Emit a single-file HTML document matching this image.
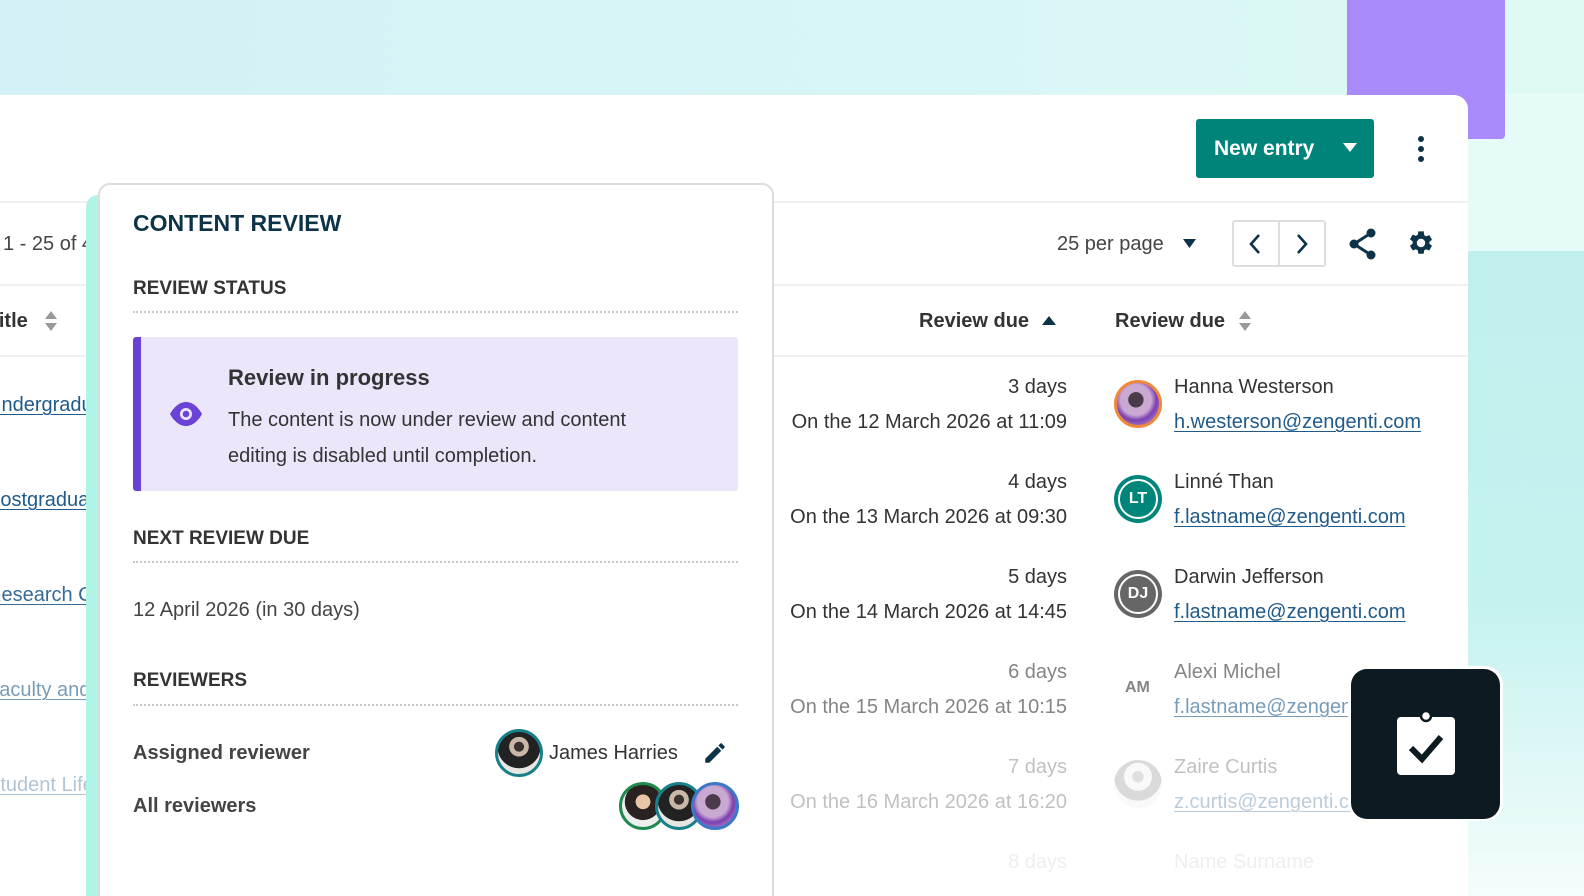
<!DOCTYPE html>
<html style="width:1584px;height:896px;overflow:hidden"><head><meta charset="utf-8"><style>
*{margin:0;padding:0;box-sizing:border-box}
body{width:1584px;height:896px;overflow:hidden;position:relative;font-family:"Liberation Sans",sans-serif;color:#333;background:linear-gradient(90deg,#d3f1f6 0%,#d9f6f6 60%,#dcf9f3 100%)}
.a{position:absolute;white-space:nowrap}
.t{font-size:20px;line-height:24px}
.lnk{color:#1f5a8a;text-decoration:underline;text-decoration-thickness:1px;text-underline-offset:3px}
.hd{font-weight:bold;font-size:19px;color:#333}
.dot{position:absolute;left:133px;width:605px;border-top:2px dotted #c8c8c8}
.av{position:absolute;width:48px;height:48px;border-radius:50%}
</style></head><body>
<div class="a" style="left:1468px;top:93px;width:116px;height:158px;background:#e4fbf8"></div>
<div class="a" style="left:1468px;top:251px;width:116px;height:645px;background:linear-gradient(180deg,#c0f0ee 0%,#c5f2ef 55%,#f4fdfc 100%)"></div>
<div class="a" style="left:1505px;top:0;width:79px;height:93px;background:#dcf9f4"></div>
<div class="a" style="left:1347px;top:0;width:158px;height:139px;background:#a88afb;border-radius:0 0 4px 4px"></div>
<div class="a" style="left:0;top:95px;width:1468px;height:801px;background:#fff;border-radius:0 14px 0 0"></div>
<div class="a" style="left:0;top:201px;width:1468px;height:2px;background:#f0f0f0"></div>
<div class="a" style="left:0;top:284px;width:1468px;height:2px;background:#f0f0f0"></div>
<div class="a" style="left:0;top:355px;width:1468px;height:2px;background:#f0f0f0"></div>
<div class="a" style="left:1196px;top:119px;width:178px;height:59px;background:#00847a;border-radius:3px"></div>
<div class="a" style="left:1214px;top:136px;color:#fff;font-size:21px;font-weight:bold;line-height:26px">New entry</div>
<svg class="a" style="left:1343px;top:143px" width="14" height="10"><path d="M0 0H14L7 9Z" fill="#fff"/></svg>
<svg class="a" style="left:1415px;top:136px" width="12" height="26"><circle cx="6" cy="3" r="3" fill="#0d3349"/><circle cx="6" cy="13" r="3" fill="#0d3349"/><circle cx="6" cy="23" r="3" fill="#0d3349"/></svg>
<div class="a t" style="left:3px;top:232px;color:#444">1 - 25 of 4</div>
<div class="a t" style="left:1057px;top:232px;color:#444">25 per page</div>
<svg class="a" style="left:1183px;top:239px" width="13" height="9"><path d="M0 0H13L6.5 9Z" fill="#0d3349"/></svg>
<div class="a" style="left:1232px;top:220px;width:94px;height:47px;border:2px solid #ddd;border-radius:3px"></div>
<div class="a" style="left:1278px;top:222px;width:2px;height:43px;background:#ddd"></div>
<svg class="a" style="left:1245px;top:232px" width="20" height="24"><path d="M14 3L6 12L14 21" stroke="#0d3349" stroke-width="2.6" fill="none"/></svg>
<svg class="a" style="left:1292px;top:232px" width="20" height="24"><path d="M6 3L14 12L6 21" stroke="#0d3349" stroke-width="2.6" fill="none"/></svg>
<svg class="a" style="left:1346px;top:227px" width="32" height="34"><path d="M25 6L8 17L25 28" stroke="#0d3349" stroke-width="3" fill="none"/><circle cx="25" cy="6" r="4.5" fill="#0d3349"/><circle cx="8" cy="17" r="4.5" fill="#0d3349"/><circle cx="25" cy="28" r="4.5" fill="#0d3349"/></svg>
<svg class="a" style="left:1407px;top:229px" width="28" height="28" viewBox="0 0 24 24"><path fill="#0d3349" d="M19.14 12.94c.04-.3.06-.61.06-.94s-.02-.64-.07-.94l2.03-1.58a.49.49 0 0 0 .12-.61l-1.92-3.32a.49.49 0 0 0-.59-.22l-2.39.96a7 7 0 0 0-1.62-.94l-.36-2.54A.48.48 0 0 0 13.920 2h-3.84a.48.48 0 0 0-.48.41l-.36 2.54c-.59.24-1.13.57-1.62.94l-2.39-.96a.49.49 0 0 0-.59.22L2.72 8.470a.47.47 0 0 0 .12.61l2.03 1.58c-.05.3-.09.63-.09.94s.02.64.07.94l-2.03 1.58a.49.49 0 0 0-.12.61l1.92 3.32c.12.22.37.29.59.22l2.39-.96c.5.38 1.03.7 1.62.94l.36 2.54c.05.24.24.41.48.41h3.84c.24 0 .44-.17.47-.41l.36-2.54c.59-.24 1.13-.56 1.62-.94l2.39.96c.22.08.47 0 .59-.22l1.92-3.32a.47.47 0 0 0-.12-.61l-2.010-1.58zM12 15.6A3.6 3.6 0 1 1 12 8.4a3.6 3.6 0 0 1 0 7.2z"/></svg>
<div class="a t" style="left:-13px;top:309px;font-weight:bold;color:#333">Title</div>
<svg class="a" style="left:44px;top:309px" width="14" height="24"><path d="M1 10L7 2L13 10Z M1 14L7 22L13 14Z" fill="#999"/></svg>
<div class="a t" style="left:919px;top:309px;font-weight:bold;color:#333">Review due</div>
<svg class="a" style="left:1042px;top:315px" width="14" height="10"><path d="M0 10L7 1L14 10Z" fill="#0d3349"/></svg>
<div class="a t" style="left:1115px;top:309px;font-weight:bold;color:#333">Review due</div>
<svg class="a" style="left:1238px;top:309px" width="14" height="24"><path d="M1 10L7 2L13 10Z M1 14L7 22L13 14Z" fill="#999"/></svg>
<div class="a t lnk" style="left:-13px;top:393px">Undergraduate</div>
<div class="a t lnk" style="left:-13px;top:488px">Postgraduate</div>
<div class="a t lnk" style="left:-13px;top:583px;opacity:.9">Research Centres</div>
<div class="a t lnk" style="left:-13px;top:678px;opacity:.6">Faculty and</div>
<div class="a t lnk" style="left:-13px;top:773px;opacity:.35">Student Life</div>
<div class="a t" style="right:517px;top:375px">3 days</div>
<div class="a t" style="right:517px;top:410px">On the 12 March 2026 at 11:09</div>
<div class="a t" style="left:1174px;top:375px">Hanna Westerson</div>
<div class="a t lnk" style="left:1174px;top:410px">h.westerson@zengenti.com</div>
<div class="av" style="left:1114px;top:380px;border:3px solid #f0883a;background:radial-gradient(circle at 45% 40%,#4a3a4a 0 22%,#c9a8d2 23% 45%,#7a3fb0 60%,#d4b5df)"></div>
<div class="a t" style="right:517px;top:470px">4 days</div>
<div class="a t" style="right:517px;top:505px">On the 13 March 2026 at 09:30</div>
<div class="a t" style="left:1174px;top:470px">Linné Than</div>
<div class="a t lnk" style="left:1174px;top:505px">f.lastname@zengenti.com</div>
<div class="av" style="left:1114px;top:475px;background:#00857a"></div>
<div class="av" style="left:1118px;top:479px;width:40px;height:40px;border:2.5px solid #fff;background:#00857a;color:#fff;font-weight:bold;font-size:16px;line-height:35px;text-align:center">LT</div>
<div class="a t" style="right:517px;top:565px">5 days</div>
<div class="a t" style="right:517px;top:600px">On the 14 March 2026 at 14:45</div>
<div class="a t" style="left:1174px;top:565px">Darwin Jefferson</div>
<div class="a t lnk" style="left:1174px;top:600px">f.lastname@zengenti.com</div>
<div class="av" style="left:1114px;top:570px;background:#666"></div>
<div class="av" style="left:1118px;top:574px;width:40px;height:40px;border:2.5px solid #fff;background:#666;color:#fff;font-weight:bold;font-size:16px;line-height:35px;text-align:center">DJ</div>
<div style="opacity:.6">
<div class="a t" style="right:517px;top:660px">6 days</div>
<div class="a t" style="right:517px;top:695px">On the 15 March 2026 at 10:15</div>
<div class="a t" style="left:1174px;top:660px">Alexi Michel</div>
<div class="a t lnk" style="left:1174px;top:695px">f.lastname@zengenti.com</div>
<div class="a" style="left:1125px;top:679px;font-weight:bold;font-size:16px;color:#333">AM</div>
</div>
<div style="opacity:.3">
<div class="a t" style="right:517px;top:755px">7 days</div>
<div class="a t" style="right:517px;top:790px">On the 16 March 2026 at 16:20</div>
<div class="a t" style="left:1174px;top:755px">Zaire Curtis</div>
<div class="a t lnk" style="left:1174px;top:790px">z.curtis@zengenti.com</div>
<div class="av" style="left:1114px;top:760px;background:radial-gradient(circle at 50% 35%,#999 0 14%,#eee 15% 35%,#888 36% 60%,#eee 61%)"></div>
</div>
<div class="a t" style="right:517px;top:850px;opacity:.08">8 days</div>
<div class="a t" style="left:1174px;top:850px;opacity:.08">Name Surname</div>
<div class="a" style="left:1348px;top:666px;width:155px;height:155px;background:#fff;border-radius:18px"></div>
<div class="a" style="left:1351px;top:669px;width:149px;height:150px;background:#0e1a22;border-radius:16px"></div>
<svg class="a" style="left:1395px;top:710px" width="62" height="68" viewBox="0 0 62 68"><rect x="2" y="7" width="58" height="58" rx="4" fill="#fff"/><circle cx="31" cy="6" r="5" fill="#fff" stroke="#0e1a22" stroke-width="2.5"/><path d="M16 38L27 49L46 27" stroke="#0e1a22" stroke-width="6" fill="none"/></svg>
<div class="a" style="left:86px;top:195px;width:20px;height:701px;background:#b0f4e8;border-radius:12px 0 0 0"></div>
<div class="a" style="left:98px;top:183px;width:676px;height:730px;background:#fff;border:2px solid #dcdcdc;border-radius:12px"></div>
<div class="a" style="left:133px;top:209px;font-weight:bold;font-size:23px;color:#0d3349;line-height:28px">CONTENT REVIEW</div>
<div class="a hd" style="left:133px;top:278px">REVIEW STATUS</div>
<div class="dot" style="top:311px"></div>
<div class="a" style="left:133px;top:337px;width:605px;height:154px;background:#ece6fb;border-left:8px solid #6a42d6;border-radius:3px"></div>
<svg class="a" style="left:169px;top:401px" width="34" height="26" viewBox="0 0 34 26"><path d="M1 13C6 4 12 1 17 1S28 4 33 13C28 22 22 25 17 25S6 22 1 13Z" fill="#6a42d6"/><circle cx="17" cy="13" r="6" fill="#ece6fb"/><circle cx="17" cy="13" r="3.3" fill="#6a42d6"/></svg>
<div class="a" style="left:228px;top:364px;font-weight:bold;font-size:22px;line-height:28px;color:#333">Review in progress</div>
<div class="a t" style="left:228px;top:402px;line-height:36px;color:#333">The content is now under review and content<br>editing is disabled until completion.</div>
<div class="a hd" style="left:133px;top:528px">NEXT REVIEW DUE</div>
<div class="dot" style="top:561px"></div>
<div class="a t" style="left:133px;top:598px;color:#444">12 April 2026 (in 30 days)</div>
<div class="a hd" style="left:133px;top:670px">REVIEWERS</div>
<div class="dot" style="top:704px"></div>
<div class="a t" style="left:133px;top:741px;font-weight:bold;color:#444">Assigned reviewer</div>
<div class="av" style="left:495px;top:729px;border:3px solid #17808a;background:radial-gradient(circle at 50% 35%,#3a3030 0 14%,#c9b8a8 15% 28%,#222 29% 62%,#e8e6e2 63%)"></div>
<div class="a t" style="left:549px;top:741px;color:#333">James Harries</div>
<svg class="a" style="left:702px;top:740px" width="26" height="26" viewBox="0 0 24 24"><path fill="#0d3349" d="M3 17.25V21h3.75L17.81 9.94l-3.75-3.75L3 17.25zM20.71 7.04a1 1 0 0 0 0-1.41l-2.34-2.34a1 1 0 0 0-1.41 0l-1.83 1.83 3.75 3.75 1.83-1.83z"/></svg>
<div class="a t" style="left:133px;top:794px;font-weight:bold;color:#444">All reviewers</div>
<div class="av" style="left:619px;top:782px;border:3px solid #1d8a4e;background:radial-gradient(circle at 50% 40%,#e9c6a8 0 22%,#2a2220 23% 55%,#eee 56%)"></div>
<div class="av" style="left:655px;top:782px;border:3px solid #17808a;background:radial-gradient(circle at 50% 35%,#3a3030 0 14%,#c9b8a8 15% 28%,#222 29% 62%,#e8e6e2 63%)"></div>
<div class="av" style="left:691px;top:782px;border:3px solid #3a79c8;background:radial-gradient(circle at 45% 40%,#4a3a4a 0 22%,#c9a8d2 23% 45%,#7a3fb0 60%,#d4b5df)"></div>
</body></html>
